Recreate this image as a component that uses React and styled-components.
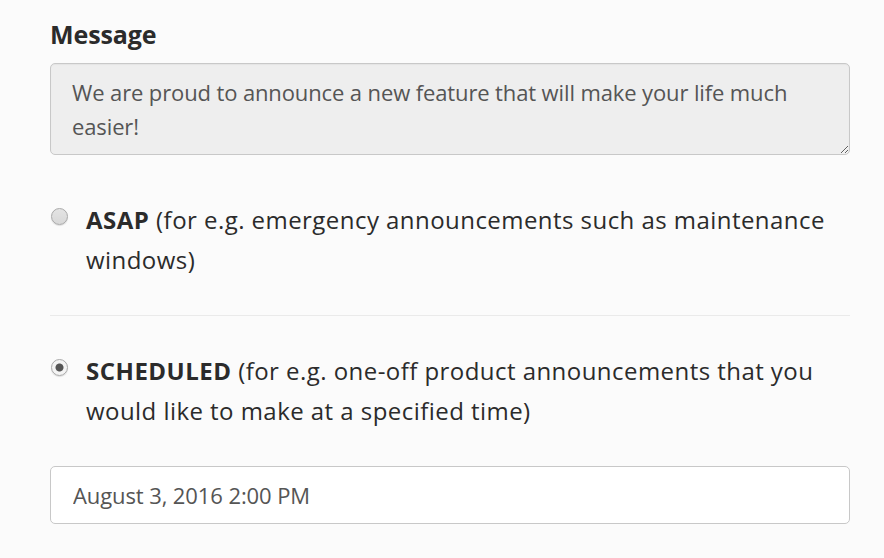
import React from "react";
import styled, { createGlobalStyle } from "styled-components";

const Global = createGlobalStyle`
  html, body { margin: 0; padding: 0; background: #fbfbfb; }
  body { font-family: "Open Sans", sans-serif; color: #333; }
`;

const Form = styled.div`
  width: 800px;
  padding: 19px 34px 30px 50px;
  display: flex;
  flex-direction: column;
`;

const Label = styled.label`
  font-family: "Open Sans", sans-serif;
  font-size: 25px;
  font-weight: 700;
  line-height: 30px;
  letter-spacing: -0.1px;
  color: #2b2b2b;
  margin-bottom: 14px;
`;

const TextArea = styled.textarea`
  box-sizing: border-box;
  width: 800px;
  height: 92px;
  padding: 11px 21px;
  border: 1px solid #c8c8c8;
  border-radius: 5px;
  background: #eeeeee;
  color: #555;
  font-family: "Open Sans", sans-serif;
  font-size: 22px;
  letter-spacing: -0.12px;
  line-height: 34px;
  resize: vertical;
  box-shadow: inset 0 1px 1px rgba(0,0,0,0.04);
  outline: none;
`;

const Option = styled.label`
  display: flex;
  align-items: flex-start;
  gap: 18px;
  margin-top: ${p => p.$top}px;
  padding-left: 1px;
`;

const Radio = styled.input.attrs({ type: "radio" })`
  appearance: none;
  -webkit-appearance: none;
  flex: none;
  box-sizing: border-box;
  width: 17px;
  height: 17px;
  margin: 8px 0 0 0;
  border-radius: 50%;
  border: 1px solid #a9a9a9;
  background: ${p => p.checked
    ? "radial-gradient(circle, #555 0 3.5px, #f4f4f4 4.5px)"
    : "linear-gradient(#e4e4e4, #d8d8d8)"};
  box-shadow: 0 1px 1px rgba(0,0,0,0.12);
`;

const OptionText = styled.span`
  font-family: "Open Sans", sans-serif;
  font-size: 24px;
  letter-spacing: 0.45px;
  line-height: 40px;
  color: #2b2b2b;
  strong { font-weight: 700; letter-spacing: 0.5px; }
`;

const Divider = styled.hr`
  margin: 35px 0 0 0;
  border: none;
  border-top: 1px solid #eaeaea;
  width: 800px;
`;

const DateInput = styled.input`
  box-sizing: border-box;
  width: 800px;
  height: 58px;
  margin-top: 35px;
  padding: 0 22px;
  border: 1px solid #c8c8c8;
  border-radius: 5px;
  background: #fff;
  color: #555;
  font-family: "Open Sans", sans-serif;
  font-size: 22px;
  letter-spacing: -0.1px;
  outline: none;
`;

export default function App() {
  return (
    <>
      <Global />
      <Form>
        <Label>Message</Label>
        <TextArea
          rows={2}
          defaultValue="We are proud to announce a new feature that will make your life much easier!"
        />
        <Option $top={45}>
          <Radio name="when" readOnly checked={false} />
          <OptionText>
            <strong>ASAP</strong> (for e.g. emergency announcements such as maintenance windows)
          </OptionText>
        </Option>
        <Divider />
        <Option $top={35}>
          <Radio name="when" readOnly checked />
          <OptionText>
            <strong>SCHEDULED</strong> (for e.g. one-off product announcements that you would like to make at a specified time)
          </OptionText>
        </Option>
        <DateInput defaultValue="August 3, 2016 2:00 PM" />
      </Form>
    </>
  );
}
